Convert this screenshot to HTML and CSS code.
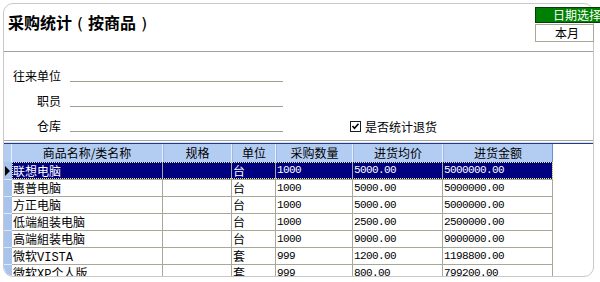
FILE: index.html
```html
<!DOCTYPE html>
<html lang="zh-CN">
<head>
<meta charset="utf-8">
<title>采购统计(按商品)</title>
<link rel="stylesheet" href="styles.css">
</head>
<body>
<div class="frame">
  <div class="head">
    <h1 class="title">采购统计<span class="paren">(</span>按商品<span class="paren">)</span></h1>
  </div>
  <div class="form">
    <div class="field"><span class="label">往来单位</span><span class="input"></span></div>
    <div class="field"><span class="label">职员</span><span class="input"></span></div>
    <div class="field">
      <span class="label">仓库</span><span class="input"></span>
      <label class="check">
        <svg class="box" width="11" height="11" viewBox="0 0 11 11"><rect x="0.5" y="0.5" width="10" height="10" fill="#fff" stroke="#1c1c1c"/><path d="M2.5 5 L4.5 7.2 L8.5 2.8" fill="none" stroke="#000" stroke-width="1.6"/></svg>
        <span>是否统计退货</span>
      </label>
    </div>
  </div>
  <div class="sep"></div>
  <div class="grid">
    <div class="grid-head">
      <div class="ind-h"></div>
      <div class="hc c-name">商品名称/类名称</div>
      <div class="hc c-spec">规格</div>
      <div class="hc c-unit">单位</div>
      <div class="hc c-qty">采购数量</div>
      <div class="hc c-price">进货均价</div>
      <div class="hc c-amt last">进货金额</div>
    </div>
    <div class="row sel first">
      <div class="ind"><span class="arrow"></span></div>
      <div class="cell c-name">联想电脑</div>
      <div class="cell c-spec"></div>
      <div class="cell c-unit">台</div>
      <div class="cell c-qty num">1000</div>
      <div class="cell c-price num">5000.00</div>
      <div class="cell c-amt num">5000000.00</div>
    </div>
    <div class="row">
      <div class="ind"></div>
      <div class="cell c-name">惠普电脑</div>
      <div class="cell c-spec"></div>
      <div class="cell c-unit">台</div>
      <div class="cell c-qty num">1000</div>
      <div class="cell c-price num">5000.00</div>
      <div class="cell c-amt num">5000000.00</div>
    </div>
    <div class="row">
      <div class="ind"></div>
      <div class="cell c-name">方正电脑</div>
      <div class="cell c-spec"></div>
      <div class="cell c-unit">台</div>
      <div class="cell c-qty num">1000</div>
      <div class="cell c-price num">5000.00</div>
      <div class="cell c-amt num">5000000.00</div>
    </div>
    <div class="row">
      <div class="ind"></div>
      <div class="cell c-name">低端組装电脑</div>
      <div class="cell c-spec"></div>
      <div class="cell c-unit">台</div>
      <div class="cell c-qty num">1000</div>
      <div class="cell c-price num">2500.00</div>
      <div class="cell c-amt num">2500000.00</div>
    </div>
    <div class="row">
      <div class="ind"></div>
      <div class="cell c-name">高端組装电脑</div>
      <div class="cell c-spec"></div>
      <div class="cell c-unit">台</div>
      <div class="cell c-qty num">1000</div>
      <div class="cell c-price num">9000.00</div>
      <div class="cell c-amt num">9000000.00</div>
    </div>
    <div class="row">
      <div class="ind"></div>
      <div class="cell c-name">微软<span class="lat">VISTA</span></div>
      <div class="cell c-spec"></div>
      <div class="cell c-unit">套</div>
      <div class="cell c-qty num">999</div>
      <div class="cell c-price num">1200.00</div>
      <div class="cell c-amt num">1198800.00</div>
    </div>
    <div class="row">
      <div class="ind"></div>
      <div class="cell c-name">微软<span class="lat">XP</span>个人版</div>
      <div class="cell c-spec"></div>
      <div class="cell c-unit">套</div>
      <div class="cell c-qty num">999</div>
      <div class="cell c-price num">800.00</div>
      <div class="cell c-amt num">799200.00</div>
    </div>
  </div>
</div>
<div class="date-picker">
  <div class="date-title">日期选择</div>
  <div class="date-value">本月</div>
</div>
</body>
</html>
```

FILE: styles.css
```css
html, body {
  margin: 0;
  padding: 0;
  overflow: hidden;
  background: #fff;
}
body {
  position: relative;
  width: 600px;
  height: 282px;
  font-family: "Noto Sans CJK SC", sans-serif;
  font-size: 12px;
  color: #000;
}

.frame {
  margin: 3px 0 0 3px;
  width: 589px;
  height: 272px;
  border: 1px solid #c8c8c8;
  border-radius: 10px;
  overflow: hidden;
  background: #fff;
}

.head {
  height: 47px;
  border-bottom: 1px solid #a0a0a0;
}
.title {
  margin: 0;
  padding: 8px 0 0 4px;
  font-size: 16px;
  font-weight: bold;
  line-height: 20px;
}
.title .paren {
  display: inline-block;
  width: 16px;
  text-align: center;
  font-family: "DejaVu Sans", sans-serif;
  font-weight: normal;
}

.form {
  box-sizing: border-box;
  height: 88px;
  padding-top: 6px;
}
.field {
  display: flex;
  align-items: flex-end;
  height: 25px;
}
.label {
  width: 57px;
  text-align: right;
  line-height: 14px;
}
.input {
  width: 213px;
  margin-left: 9px;
  height: 0;
  border-bottom: 1px solid #a0a090;
  margin-bottom: 1px;
}
.check {
  display: flex;
  align-items: flex-end;
  margin-left: 67px;
  gap: 4px;
  line-height: 13px;
}
.check .box {
  display: block;
  margin-bottom: 1px;
}

.sep {
  height: 1px;
  border-top: 1px solid #a4a4a4;
  border-bottom: 1px solid #e2e2e2;
}

.grid {
  border-top: 1px solid #1f3c96;
}
.grid-head {
  display: flex;
  width: 549px;
  height: 18px;
  background: #b3cdf2;
}
.ind-h {
  width: 8px;
  flex: none;
  box-sizing: border-box;
  border-right: 1px solid #e8effb;
}
.hc {
  flex: none;
  box-sizing: border-box;
  text-align: center;
  line-height: 17px;
  border-right: 1px solid #e8effb;
  border-left: 1px solid #9db8e6;
}
.hc.c-name { border-left: none; }
.hc.last { border-right: 1px solid #6d8dd6; }

.c-name { width: 151px; }
.c-spec { width: 69px; }
.c-unit { width: 44px; }
.c-qty { width: 77px; }
.c-price { width: 90px; }
.c-amt { width: 110px; }

.row {
  position: relative;
  display: flex;
  width: 549px;
  height: 17px;
}
.row.first { height: 18px; }
.ind {
  position: relative;
  flex: none;
  width: 8px;
  box-sizing: border-box;
  background: #a9c4ec;
  border-bottom: 1px solid #e2eaf8;
}
.arrow {
  position: absolute;
  left: 1px;
  top: 4px;
  width: 0;
  height: 0;
  border-left: 5px solid #000;
  border-top: 5px solid transparent;
  border-bottom: 5px solid transparent;
}
.cell {
  flex: none;
  box-sizing: border-box;
  padding-left: 1px;
  border-right: 1px solid #a8a898;
  border-bottom: 1px solid #a8a898;
  line-height: 16px;
  white-space: nowrap;
  overflow: hidden;
  background: #fff;
}
.row.first .cell { line-height: 17px; }
.num {
  font-family: "Liberation Mono", monospace;
  font-size: 11px;
  letter-spacing: -0.6px;
}
.lat {
  font-family: "Liberation Mono", monospace;
  font-size: 12px;
}
.row.sel .cell {
  background: #000080;
  color: #fff;
}
.row.sel::after {
  content: "";
  position: absolute;
  left: 8px;
  top: 0;
  right: 0;
  bottom: 1px;
  border: 1px dotted #f4f07a;
  pointer-events: none;
}

.date-picker {
  position: absolute;
  left: 535px;
  top: 7px;
}
.date-title {
  box-sizing: border-box;
  width: 84px;
  height: 16px;
  background: #008000;
  border: 1px solid #0c3a0c;
  color: #fff;
  text-align: center;
  line-height: 14px;
}
.date-value {
  box-sizing: border-box;
  margin-top: 1px;
  width: 59px;
  height: 18px;
  padding-left: 5px;
  border: 1px solid #a8a898;
  background: #fff;
  text-align: center;
  line-height: 16px;
}
```
